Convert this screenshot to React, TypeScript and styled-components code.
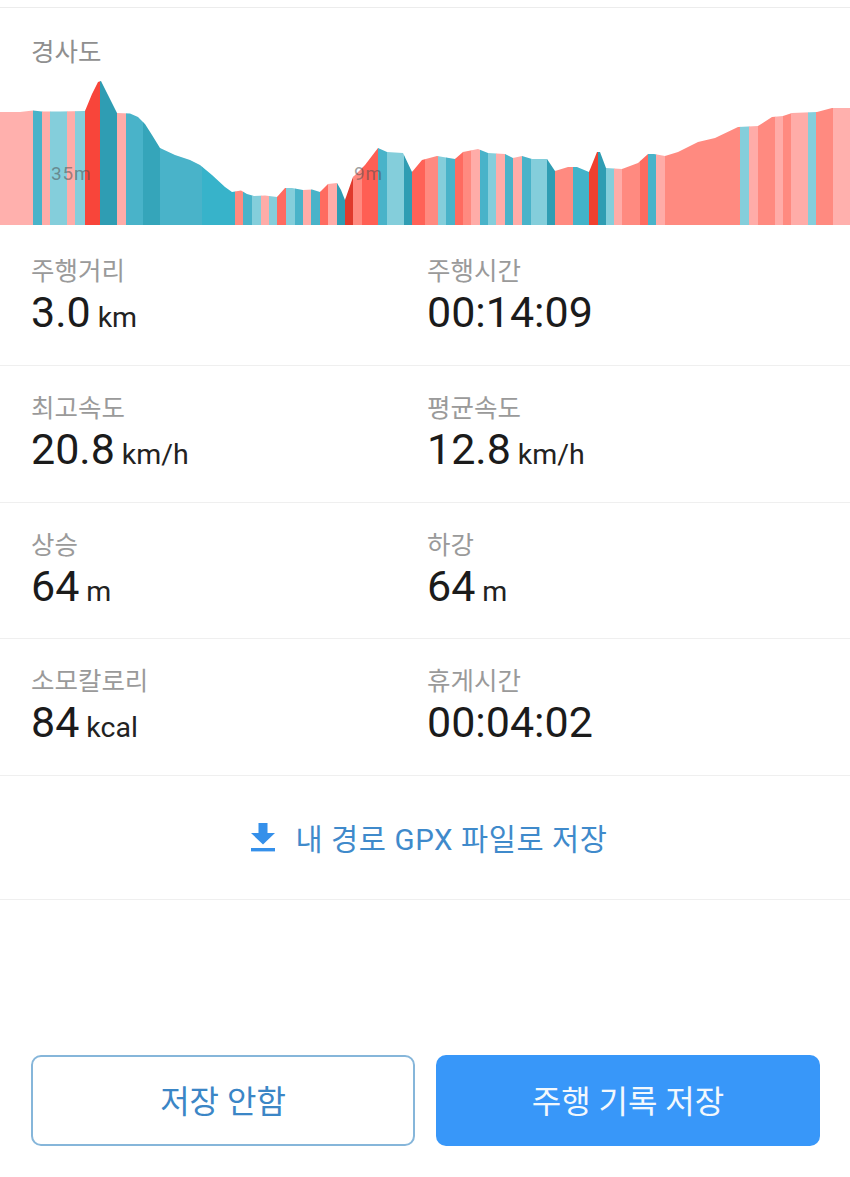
import styled, { createGlobalStyle } from "styled-components";

const GlobalStyle = createGlobalStyle`
  html, body {
    margin: 0;
    padding: 0;
    background: #fff;
  }
  * {
    box-sizing: border-box;
  }
`;

const FONT = `Roboto, "Noto Sans CJK KR", sans-serif`;

const PROFILE: [number, number][] = [
  [0, 112], [20, 112], [33, 110.5], [42, 111.5], [60, 111.5], [85, 111], [92, 94], [98, 82], [101, 81],
  [108, 95], [117, 113], [130, 113.5], [138, 117], [145, 124], [152, 135], [160, 148], [175, 155], [190, 160],
  [200, 165], [212, 175], [225, 187], [232, 192], [241, 190.5], [247, 194], [254, 196], [265, 195.5], [277, 197],
  [285, 188], [292, 188], [303, 190], [312, 189.5], [320, 192], [328, 184], [337, 183], [341, 190], [345, 200],
  [353, 177], [365, 165], [378, 148], [387, 152], [403, 153], [412, 172], [422, 160], [437, 156], [455, 159],
  [463, 152], [478, 149], [488, 153], [505, 154], [513, 158], [522, 156], [532, 159], [547, 159], [555, 171],
  [568, 167], [577, 167], [589, 172], [597, 152], [600, 152], [606, 168], [622, 169], [638, 163], [648, 154],
  [654, 154], [665, 156], [678, 152], [698, 142], [715, 138], [738, 127], [758, 126], [772, 117], [783, 116],
  [792, 113], [817, 112], [832, 108], [850, 108],
];

const PINK = "#ffaca8";
const SALMON = "#ff8a80";
const CORAL = "#ff6b60";
const RED = "#f8453a";
const PALE = "#84cedb";
const TEAL = "#49b3c9";
const DEEP = "#2f9db3";

const BANDS: [number, string][] = [
  [33, "#ffb0ad"], [42, TEAL], [50, PINK], [67, PALE], [75, PINK], [85, PALE], [100, RED], [117, DEEP],
  [126, PINK], [143, TEAL], [160, "#35a5ba"], [202, TEAL], [235, "#37b3ca"], [243, SALMON], [252, TEAL],
  [261, PALE], [269, PINK], [277, PALE], [286, CORAL], [295, PALE], [303, TEAL], [311, PINK], [320, TEAL],
  [328, CORAL], [337, PINK], [345, DEEP], [353, "#e03a2c"], [362, SALMON], [378, "#ff5f54"], [387, TEAL],
  [404, PALE], [412, DEEP], [425, "#ff6257"], [438, SALMON], [446, PALE], [455, TEAL], [463, CORAL],
  [471, SALMON], [480, PINK], [488, TEAL], [496, PALE], [505, PINK], [513, TEAL], [522, PINK], [531, TEAL],
  [547, PALE], [555, DEEP], [573, SALMON], [589, "#42b3c9"], [598, "#f0402f"], [606, DEEP], [614, PALE],
  [622, PINK], [640, SALMON], [648, CORAL], [656, TEAL], [665, PINK], [740, SALMON], [749, PALE], [758, PINK],
  [775, SALMON], [783, PINK], [791, SALMON], [808, PINK], [816, PALE], [833, SALMON], [850, "#ffb0ad"],
];

const CHART_TOP = 80;
const CHART_HEIGHT = 145;

const STATS = [
  {
    height: 141,
    pad: 29,
    items: [
      { label: "주행거리", value: "3.0", unit: "km" },
      { label: "주행시간", value: "00:14:09" },
    ],
  },
  {
    height: 137,
    pad: 25,
    items: [
      { label: "최고속도", value: "20.8", unit: "km/h" },
      { label: "평균속도", value: "12.8", unit: "km/h" },
    ],
  },
  {
    height: 136,
    pad: 25,
    items: [
      { label: "상승", value: "64", unit: "m" },
      { label: "하강", value: "64", unit: "m" },
    ],
  },
  {
    height: 137,
    pad: 25,
    items: [
      { label: "소모칼로리", value: "84", unit: "kcal" },
      { label: "휴게시간", value: "00:04:02" },
    ],
  },
];

function SlopeChart() {
  const outline =
    "M0 " + CHART_HEIGHT + " " +
    PROFILE.map(([x, y]) => `L${x} ${y - CHART_TOP}`).join(" ") +
    ` L850 ${CHART_HEIGHT} Z`;
  let left = 0;
  return (
    <ChartFrame>
      <svg width="850" height={CHART_HEIGHT} viewBox={`0 0 850 ${CHART_HEIGHT}`} style={{ display: "block" }}>
        <defs>
          <clipPath id="slope-outline">
            <path d={outline} />
          </clipPath>
        </defs>
        <g clipPath="url(#slope-outline)">
          {BANDS.map(([right, color]) => {
            const x = left;
            left = right;
            return <rect key={right} x={x} y="0" width={right - x + 0.4} height={CHART_HEIGHT} fill={color} />;
          })}
        </g>
      </svg>
      <MaxMark>35m</MaxMark>
      <MinMark>9m</MinMark>
    </ChartFrame>
  );
}

export default function App() {
  return (
    <Page>
      <GlobalStyle />
      <TopRule />
      <SectionTitle>경사도</SectionTitle>
      <SlopeChart />
      <Stats>
        {STATS.map((row) => (
          <StatRow key={row.items[0].label} $height={row.height} $pad={row.pad}>
            {row.items.map((stat) => (
              <Stat key={stat.label}>
                <StatLabel>{stat.label}</StatLabel>
                <StatValue>
                  {stat.value}
                  {stat.unit && <StatUnit>{stat.unit}</StatUnit>}
                </StatValue>
              </Stat>
            ))}
          </StatRow>
        ))}
      </Stats>
      <ExportRow>
        <svg width="26" height="30" viewBox="0 0 26 30" aria-hidden="true">
          <path d="M8.5 1h9v10H25L13 22.5 1 11h7.5z" fill="#3590ea" />
          <rect x="1" y="26" width="24" height="3.4" fill="#3590ea" />
        </svg>
        <ExportText>내 경로 GPX 파일로 저장</ExportText>
      </ExportRow>
      <Actions>
        <GhostButton>저장 안함</GhostButton>
        <PrimaryButton>주행 기록 저장</PrimaryButton>
      </Actions>
    </Page>
  );
}

const Page = styled.main`
  width: 850px;
  height: 1177px;
  display: flex;
  flex-direction: column;
  overflow: hidden;
  background: #fff;
  font-family: ${FONT};
  padding-top: 7px;
`;

const TopRule = styled.div`
  height: 1px;
  background: #ececec;
`;

const SectionTitle = styled.h2`
  margin: 0;
  height: 72px;
  padding: 27px 0 0 31px;
  font-size: 25.5px;
  line-height: 34px;
  font-weight: 400;
  color: #8f8f8f;
`;

const ChartFrame = styled.div`
  position: relative;
  height: 145px;
`;

const ChartMark = styled.span`
  position: absolute;
  top: 83px;
  font-size: 19px;
  line-height: 22px;
  letter-spacing: 0.8px;
  color: rgba(80, 80, 80, 0.55);
`;

const MaxMark = styled(ChartMark)`
  left: 51px;
`;

const MinMark = styled(ChartMark)`
  left: 354px;
`;

const Stats = styled.section`
  display: flex;
  flex-direction: column;
`;

const StatRow = styled.div<{ $height: number; $pad: number }>`
  height: ${({ $height }) => $height}px;
  padding: ${({ $pad }) => $pad}px 0 0 31px;
  display: grid;
  grid-template-columns: 396px 1fr;
  border-bottom: 1px solid #efefef;
`;

const Stat = styled.div`
  display: flex;
  flex-direction: column;
`;

const StatLabel = styled.div`
  font-size: 25.5px;
  line-height: 34px;
  color: #9a9a9a;
`;

const StatValue = styled.div`
  font-size: 43px;
  line-height: 50px;
  margin-top: -1px;
  color: #1b1b1b;
`;

const StatUnit = styled.span`
  font-size: 28.5px;
  margin-left: 7px;
  color: #222;
`;

const ExportRow = styled.div`
  height: 124px;
  display: flex;
  align-items: center;
  justify-content: center;
  gap: 19px;
  padding: 0 0 2px 8px;
  border-bottom: 1px solid #efefef;
`;

const ExportText = styled.span`
  font-size: 29.5px;
  letter-spacing: 0.6px;
  color: #3f8acb;
`;

const Actions = styled.div`
  margin-top: auto;
  display: grid;
  grid-template-columns: 384px 384px;
  gap: 21px;
  padding: 0 30px 31px 31px;
`;

const GhostButton = styled.button`
  height: 91px;
  padding-bottom: 4px;
  border: 2px solid #86b6da;
  border-radius: 10px;
  background: #fff;
  font-family: ${FONT};
  font-size: 32px;
  color: #3b86c6;
`;

const PrimaryButton = styled.button`
  height: 91px;
  padding-bottom: 4px;
  border: 0;
  border-radius: 10px;
  background: #3897f9;
  font-family: ${FONT};
  font-size: 32px;
  color: #f2f8fd;
`;
